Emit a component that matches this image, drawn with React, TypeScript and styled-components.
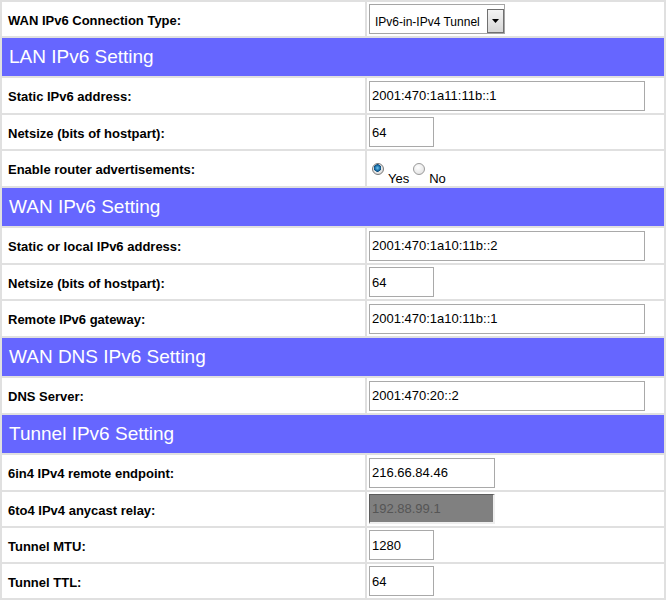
import React from 'react';
import styled, { createGlobalStyle, css } from 'styled-components';

const GlobalStyle = createGlobalStyle`
  html, body {
    margin: 0;
    padding: 0;
    background: #e0e0e0;
    font-family: "Liberation Sans", Arial, sans-serif;
  }
`;

const Sheet = styled.div`
  display: flex;
  flex-direction: column;
  gap: 2px;
  padding: 2px;
  width: 666px;
  box-sizing: border-box;
  background: #e0e0e0;
`;

const Row = styled.div<{ $h: number }>`
  display: grid;
  grid-template-columns: 363px 297px;
  column-gap: 2px;
  height: ${({ $h }) => $h}px;
`;

const Label = styled.div`
  display: flex;
  align-items: center;
  padding: 2px 0 0 6px;
  background: #fff;
  color: #000;
  font-size: 13px;
  font-weight: bold;
`;

const Field = styled.div`
  display: flex;
  align-items: center;
  padding-left: 2px;
  background: #fff;
`;

const SectionHeader = styled.div`
  display: flex;
  align-items: center;
  height: 38px;
  padding-left: 7px;
  background: #6666ff;
  color: #fff;
  font-size: 19px;
`;

const TextInput = styled.input<{ $w: number }>`
  box-sizing: border-box;
  width: ${({ $w }) => $w}px;
  height: 30px;
  margin: 0;
  padding: 0 2px;
  border: 1px solid #a9a9a9;
  background: #fff;
  color: #000;
  font-family: "Liberation Sans", Arial, sans-serif;
  font-size: 13px;
  outline: none;

  ${({ disabled }) =>
    disabled &&
    css`
      background: #808080;
      color: #555;
      border-top: 1px solid #5c5c5c;
      border-left: 1px solid #5c5c5c;
      border-right: 2px solid #eeeeee;
      border-bottom: 2px solid #eeeeee;
    `}
`;

const SelectBox = styled.div`
  box-sizing: border-box;
  position: relative;
  display: flex;
  align-items: flex-end;
  width: 136px;
  height: 30px;
  padding: 0 0 4px 5px;
  border: 1px solid #a5a5a5;
  background: #fff;
  font-size: 12px;
  color: #000;
`;

const SelectArrow = styled.span`
  position: absolute;
  right: 0;
  bottom: 0;
  box-sizing: border-box;
  display: flex;
  align-items: center;
  justify-content: center;
  width: 17px;
  height: 24px;
  border: 1px solid #707070;
  background: linear-gradient(#f4f4f4, #d6d6d6);
`;

const RadioGroup = styled.div`
  display: flex;
  align-items: flex-end;
  height: 100%;
  padding: 0 0 0 3px;
  box-sizing: border-box;
  font-size: 13px;
  color: #000;
`;

const RadioOption = styled.label`
  display: flex;
  align-items: flex-end;
  margin-right: 4px;
`;

const RadioDot = styled.span<{ $checked?: boolean }>`
  box-sizing: border-box;
  display: inline-block;
  width: 12px;
  height: 12px;
  margin: 0 4px 11px 0;
  border-radius: 50%;
  border: 1px solid #9a9a9a;
  background: radial-gradient(circle at 40% 35%, #ffffff, #dcdcdc);

  ${({ $checked }) =>
    $checked &&
    css`
      background: radial-gradient(circle at 45% 40%, #6ec6f0 0, #1a6ea8 2.5px, #0d4c7c 3.5px, #e8e8e8 4px, #cfcfcf 100%);
      border-color: #7a7a7a;
    `}
`;

type Item =
  | { kind: 'header'; title: string }
  | { kind: 'text'; label: string; value: string; w: number; h: number; disabled?: boolean }
  | { kind: 'select'; label: string; value: string; h: number }
  | { kind: 'radio'; label: string; h: number };

const items: Item[] = [
  { kind: 'select', label: 'WAN IPv6 Connection Type:', value: 'IPv6-in-IPv4 Tunnel', h: 34 },
  { kind: 'header', title: 'LAN IPv6 Setting' },
  { kind: 'text', label: 'Static IPv6 address:', value: '2001:470:1a11:11b::1', w: 276, h: 35 },
  { kind: 'text', label: 'Netsize (bits of hostpart):', value: '64', w: 65, h: 34 },
  { kind: 'radio', label: 'Enable router advertisements:', h: 35 },
  { kind: 'header', title: 'WAN IPv6 Setting' },
  { kind: 'text', label: 'Static or local IPv6 address:', value: '2001:470:1a10:11b::2', w: 276, h: 35 },
  { kind: 'text', label: 'Netsize (bits of hostpart):', value: '64', w: 65, h: 34 },
  { kind: 'text', label: 'Remote IPv6 gateway:', value: '2001:470:1a10:11b::1', w: 276, h: 35 },
  { kind: 'header', title: 'WAN DNS IPv6 Setting' },
  { kind: 'text', label: 'DNS Server:', value: '2001:470:20::2', w: 276, h: 35 },
  { kind: 'header', title: 'Tunnel IPv6 Setting' },
  { kind: 'text', label: '6in4 IPv4 remote endpoint:', value: '216.66.84.46', w: 126, h: 35 },
  { kind: 'text', label: '6to4 IPv4 anycast relay:', value: '192.88.99.1', w: 126, h: 34, disabled: true },
  { kind: 'text', label: 'Tunnel MTU:', value: '1280', w: 65, h: 34 },
  { kind: 'text', label: 'Tunnel TTL:', value: '64', w: 65, h: 34 },
];

function ArrowIcon() {
  return (
    <svg width="7" height="4" viewBox="0 0 7 4">
      <path d="M0 0h7L3.5 4z" fill="#000" />
    </svg>
  );
}

function renderField(item: Item) {
  switch (item.kind) {
    case 'select':
      return (
        <SelectBox>
          {item.value}
          <SelectArrow>
            <ArrowIcon />
          </SelectArrow>
        </SelectBox>
      );
    case 'radio':
      return (
        <RadioGroup>
          <RadioOption>
            <RadioDot $checked />
            Yes
          </RadioOption>
          <RadioOption>
            <RadioDot />
            No
          </RadioOption>
        </RadioGroup>
      );
    case 'text':
      return (
        <TextInput
          type="text"
          $w={item.w}
          defaultValue={item.value}
          disabled={item.disabled}
        />
      );
    default:
      return null;
  }
}

export default function App() {
  return (
    <>
      <GlobalStyle />
      <Sheet>
        {items.map((item, i) =>
          item.kind === 'header' ? (
            <SectionHeader key={i}>{item.title}</SectionHeader>
          ) : (
            <Row key={i} $h={item.h}>
              <Label>{item.label}</Label>
              <Field>{renderField(item)}</Field>
            </Row>
          )
        )}
      </Sheet>
    </>
  );
}
